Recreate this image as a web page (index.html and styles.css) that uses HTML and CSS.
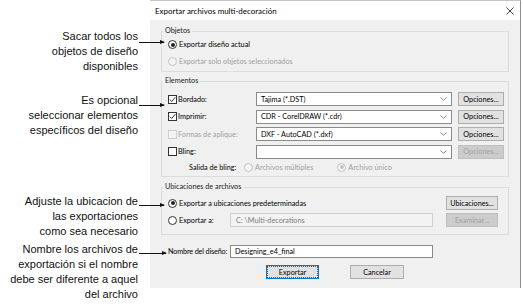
FILE: index.html
```html
<!DOCTYPE html>
<html lang="es">
<head>
<meta charset="utf-8">
<title>Exportar archivos multi-decoración</title>
<link rel="stylesheet" href="styles.css">
</head>
<body>
<div class="page">
  <div class="notes">
    <div class="note n1">Sacar todos los<i class="arrow a1"></i><br>objetos de diseño<br>disponibles</div>
    <div class="note n2">Es opcional<i class="arrow a2"></i><br>seleccionar elementos<br>específicos del diseño</div>
    <div class="note n3">Adjuste la ubicacion de<i class="arrow a3"></i><br>las exportaciones<br>como sea necesario</div>
    <div class="note n4">Nombre los archivos de<i class="arrow a4"></i><br>exportación si el nombre<br>debe ser diferente a aquel<br>del archivo</div>
  </div>

  <div class="dialog">
    <div class="titlebar">
      <span class="title">Exportar archivos multi-decoración</span>
      <svg class="close" width="8" height="8" viewBox="0 0 8 8"><path d="M0.5 0.5 L7.5 7.5 M7.5 0.5 L0.5 7.5" stroke="#333" stroke-width="0.9" fill="none"/></svg>
    </div>
    <div class="body">
      <div class="group g-obj">
        <div class="legend">Objetos</div>
        <div class="row"><span class="radio on"></span>Exportar diseño actual</div>
        <div class="row off"><span class="radio"></span>Exportar solo objetos seleccionados</div>
      </div>

      <div class="group g-elem">
        <div class="legend">Elementos</div>
        <div class="egrid">
          <div class="clabel"><span class="check on"><svg width="7" height="7" viewBox="0 0 7 7"><path d="M0.8 3.6 L2.7 5.5 L6.3 1.2" stroke="#222" stroke-width="0.9" fill="none"/></svg></span>Bordado:</div>
          <div class="combo">Tajima (*.DST)<svg class="chev" width="7" height="4" viewBox="0 0 7 4"><path d="M0.5 0.5 L3.5 3.3 L6.5 0.5" stroke="#7a7a7a" stroke-width="0.9" fill="none"/></svg></div>
          <div class="btn">Opciones...</div>

          <div class="clabel"><span class="check on"><svg width="7" height="7" viewBox="0 0 7 7"><path d="M0.8 3.6 L2.7 5.5 L6.3 1.2" stroke="#222" stroke-width="0.9" fill="none"/></svg></span>Imprimir:</div>
          <div class="combo">CDR - CorelDRAW (*.cdr)<svg class="chev" width="7" height="4" viewBox="0 0 7 4"><path d="M0.5 0.5 L3.5 3.3 L6.5 0.5" stroke="#7a7a7a" stroke-width="0.9" fill="none"/></svg></div>
          <div class="btn">Opciones...</div>

          <div class="clabel off"><span class="check"></span>Formas de aplique:</div>
          <div class="combo">DXF - AutoCAD (*.dxf)<svg class="chev" width="7" height="4" viewBox="0 0 7 4"><path d="M0.5 0.5 L3.5 3.3 L6.5 0.5" stroke="#7a7a7a" stroke-width="0.9" fill="none"/></svg></div>
          <div class="btn">Opciones...</div>

          <div class="clabel"><span class="check"></span>Bling:</div>
          <div class="combo"><svg class="chev" width="7" height="4" viewBox="0 0 7 4"><path d="M0.5 0.5 L3.5 3.3 L6.5 0.5" stroke="#7a7a7a" stroke-width="0.9" fill="none"/></svg></div>
          <div class="btn disabled">Opciones...</div>
        </div>
        <div class="bling">
          <span class="bling-label">Salida de bling:</span>
          <span class="opt off"><span class="radio"></span>Archivos múltiples</span>
          <span class="opt off"><span class="radio dot"></span>Archivo único</span>
        </div>
      </div>

      <div class="group g-loc">
        <div class="legend">Ubicaciones de archivos</div>
        <div class="lgrid">
          <div class="lrow1"><span class="radio on"></span>Exportar a ubicaciones predeterminadas</div>
          <div class="btn">Ubicaciones...</div>
          <div class="lrow2"><span class="radio"></span>Exportar a:</div>
          <div class="path">C: \Multi-decorations</div>
          <div class="btn disabled">Examinar...</div>
        </div>
      </div>

      <div class="name-row">
        <span class="name-label">Nombre del diseño:</span>
        <div class="field">Designing_e4_final</div>
      </div>

      <div class="actions">
        <div class="btn big default">Exportar</div>
        <div class="btn big">Cancelar</div>
      </div>
    </div>
  </div>
</div>
</body>
</html>
```

FILE: styles.css
```css
* { box-sizing: border-box; }

body {
  margin: 0;
  width: 523px;
  height: 306px;
  overflow: hidden;
  background: #ffffff;
}

.page {
  display: flex;
  height: 306px;
}

/* ---------- annotations ---------- */
.notes {
  width: 150px;
  flex: none;
  display: flex;
  flex-direction: column;
  font-family: "Liberation Sans", Arial, sans-serif;
  font-size: 11px;
  line-height: 15px;
  color: #111;
  text-align: right;
}

.note {
  position: relative;
  padding-right: 12px;
  white-space: nowrap;
}

.n1 { margin-top: 28.5px; }
.n2 { margin-top: 19px; }
.n3 { margin-top: 56px; }
.n4 { margin-top: 3px; }

.arrow {
  position: absolute;
  left: 139px;
  width: 25px;
  height: 1px;
  background: #111;
}

.arrow::after {
  content: "";
  position: absolute;
  right: -1px;
  top: -2px;
  border-left: 5px solid #111;
  border-top: 2.5px solid transparent;
  border-bottom: 2.5px solid transparent;
}

.a1 { top: 13px; }
.a2 { top: 12.5px; }
.a3 { top: 11px; }
.a4 { top: 11.5px; width: 27px; }

/* ---------- dialog ---------- */
.dialog {
  width: 371px;
  flex: none;
  align-self: flex-start;
  border-top: 1px solid #c6c6c6;
  border-right: 1px solid #8f8f8f;
  font-family: Lato, "Liberation Sans", Arial, sans-serif;
  font-size: 7.25px;
  color: #000;
}

.titlebar {
  height: 19px;
  background: #fff;
  display: flex;
  align-items: center;
  justify-content: space-between;
  padding: 0 6px 0 5px;
  font-size: 7.95px;
}

.close { display: block; }

.body {
  background: #f0f0f0;
  padding: 11px 11px 9px 11px;
}

.group {
  border: 1px solid #dcdcdc;
}

.legend {
  width: fit-content;
  margin: -6px 0 0 1px;
  padding: 0 2px;
  height: 10px;
  line-height: 10px;
  background: #f0f0f0;
  color: #1a1a1a;
}

.row {
  height: 17px;
  display: flex;
  align-items: center;
  padding-left: 6px;
}

.g-obj { padding-bottom: 1px; }

.off { color: #a0a0a0; }

.radio {
  width: 9px;
  height: 9px;
  flex: none;
  border: 1px solid #333;
  border-radius: 50%;
  background: #fff;
  margin-right: 2px;
  display: inline-flex;
  align-items: center;
  justify-content: center;
}

.radio.on::after {
  content: "";
  width: 4px;
  height: 4px;
  border-radius: 50%;
  background: #222;
}

.off .radio {
  border-color: #c4c4c4;
  background: #f4f4f4;
}

.off .radio.dot::after {
  content: "";
  width: 4px;
  height: 4px;
  border-radius: 50%;
  background: #c4c4c4;
}

/* elementos */
.g-elem {
  margin-top: 9px;
  padding: 0 0 2.5px 0;
}

.egrid {
  display: grid;
  grid-template-columns: 82px 196px 46px;
  grid-auto-rows: 14px;
  column-gap: 6px;
  row-gap: 3.5px;
  padding: 6px 0 0 6px;
}

.clabel {
  display: flex;
  align-items: center;
  white-space: nowrap;
}

.check {
  width: 9px;
  height: 9px;
  flex: none;
  border: 1px solid #333;
  background: #fff;
  margin-right: 1px;
  display: inline-flex;
  align-items: center;
  justify-content: center;
}

.check svg { display: block; }

.clabel.off .check {
  border-color: #cfcfcf;
  background: #f4f4f4;
}

.combo {
  background: #fff;
  border: 1px solid #8a8a8a;
  display: flex;
  align-items: center;
  justify-content: space-between;
  padding: 0 4px 0 4px;
  white-space: nowrap;
}

.chev { display: block; margin-left: auto; }

.btn {
  background: #e1e1e1;
  border: 1px solid #adadad;
  display: flex;
  align-items: center;
  justify-content: center;
  white-space: nowrap;
}

.btn.disabled {
  background: #cccccc;
  border-color: #bfbfbf;
  color: #a0a0a0;
}

.bling {
  height: 13px;
  margin-top: 2px;
  display: flex;
  align-items: center;
  padding-left: 27px;
  white-space: nowrap;
}

.bling-label { width: 55px; }

.opt {
  display: flex;
  align-items: center;
}

.opt + .opt { margin-left: 24px; }
.opt .radio { margin-right: 2px; }

/* ubicaciones */
.g-loc {
  margin-top: 10px;
  padding-bottom: 7px;
}

.lgrid {
  display: grid;
  grid-template-columns: 62px 203px 65px;
  grid-template-rows: 14px 14px;
  row-gap: 3px;
  padding: 4px 0 0 6px;
}

.lgrid .btn { margin-left: 13px; width: 52px; }

.lrow1 {
  grid-column: 1 / 3;
  display: flex;
  align-items: center;
  white-space: nowrap;
}

.lrow2 {
  display: flex;
  align-items: center;
  white-space: nowrap;
}

.path {
  border: 1px solid #cfcfcf;
  background: #f3f3f3;
  color: #7a7a7a;
  display: flex;
  align-items: center;
  padding-left: 5px;
}

/* name */
.name-row {
  margin-top: 10px;
  height: 13px;
  display: flex;
  align-items: center;
  padding-left: 7px;
  white-space: nowrap;
}

.name-label {
  width: 62px;
  letter-spacing: -0.15px;
}

.field {
  width: 203px;
  height: 13px;
  background: #fff;
  border: 1px solid #8a8a8a;
  display: flex;
  align-items: center;
  padding-left: 4px;
}

.actions {
  margin-top: 7px;
  display: flex;
  justify-content: center;
  gap: 31px;
}

.btn.big {
  height: 14px;
  width: 54px;
}

.btn.default {
  width: 53px;
  border-color: #0078d7;
  outline: 1px dotted #555;
  outline-offset: -2.5px;
}
```
